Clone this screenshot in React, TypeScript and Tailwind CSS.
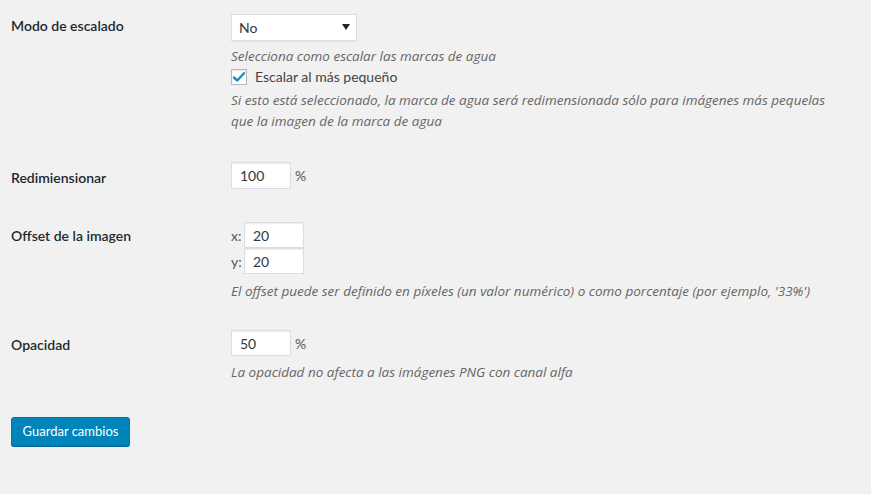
import React from "react";

const inputCls =
  "h-[27px] w-[60px] bg-white border border-[#ddd] shadow-[inset_0_1px_2px_rgba(0,0,0,0.07)] flex items-center pl-[8px] text-[14px] text-[#32373c]";
const descCls = "font-['Open_Sans',sans-serif] text-[13.5px] italic text-[#666] whitespace-nowrap";

export default function App() {
  return (
    <div className="min-h-[494px] w-full bg-[#f1f1f1] px-[11px] pt-[14px] font-['Lato',sans-serif] text-[#23282d]">
      {/* Row 1 */}
      <div className="flex">
        <div className="w-[220px] shrink-0 pt-[2px] text-[14px] font-semibold leading-[20px]">Modo de escalado</div>
        <div className="flex flex-col">
          <div className="relative h-[27px] w-[126px] bg-white border border-[#ddd] shadow-[0_1px_1px_rgba(0,0,0,0.04)] flex items-center pl-[7px] text-[14px] text-[#32373c]">
            No
            <svg className="absolute right-[6px] top-[9px]" width="8" height="6" viewBox="0 0 8 6">
              <path d="M0 0 H8 L4 6 Z" fill="#222" />
            </svg>
          </div>
          <div className={"mt-[5px] leading-[20px] " + descCls}>
            Selecciona como escalar las marcas de agua
          </div>
          <div className="mt-[1px] flex items-center leading-[20px] text-[14px] text-[#444]">
            <span className="h-[16px] w-[16px] bg-white border border-[#b4b9be] shadow-[inset_0_1px_2px_rgba(0,0,0,0.1)] flex items-center justify-center">
              <svg width="14" height="12" viewBox="0 0 14 12">
                <path d="M2 6.5 L5.3 9.5 L12 2.2" stroke="#1e8cbe" strokeWidth="2.4" fill="none" strokeLinecap="round" strokeLinejoin="round" />
              </svg>
            </span>
            <span className="ml-[8px]">Escalar al más pequeño</span>
          </div>
          <div className={"mt-[3px] leading-[21px] " + descCls}>
            Si esto está seleccionado, la marca de agua será redimensionada sólo para imágenes más pequelas
            <br />
            que la imagen de la marca de agua
          </div>
        </div>
      </div>

      {/* Row 2 */}
      <div className="mt-[30px] flex">
        <div className="w-[220px] shrink-0 pt-[6px] text-[14px] font-semibold leading-[20px]">Redimiensionar</div>
        <div className="flex items-center self-start">
          <div className={inputCls}>100</div>
          <span className="ml-[4px] text-[14px] text-[#555]">%</span>
        </div>
      </div>

      {/* Row 3 */}
      <div className="mt-[33px] flex">
        <div className="w-[220px] shrink-0 pt-[4px] text-[14px] font-semibold leading-[20px]">Offset de la imagen</div>
        <div className="flex flex-col">
          <div className="flex items-center">
            <span className="w-[13px] text-[14px] text-[#555]">x:</span>
            <div className={inputCls + " !h-[26px]"}>20</div>
          </div>
          <div className="flex items-center">
            <span className="w-[13px] text-[14px] text-[#555]">y:</span>
            <div className={inputCls + " !h-[26px]"}>20</div>
          </div>
          <div className={"mt-[7px] leading-[20px] " + descCls}>
            El offset puede ser definido en píxeles (un valor numérico) o como porcentaje (por ejemplo, '33%')
          </div>
        </div>
      </div>

      {/* Row 4 */}
      <div className="mt-[29px] flex">
        <div className="w-[220px] shrink-0 pt-[5px] text-[14px] font-semibold leading-[20px]">Opacidad</div>
        <div className="flex flex-col">
          <div className="flex items-center">
            <div className={inputCls + " !h-[26px]"}>50</div>
            <span className="ml-[4px] text-[14px] text-[#555]">%</span>
          </div>
          <div className={"mt-[6px] leading-[20px] " + descCls}>
            La opacidad no afecta a las imágenes PNG con canal alfa
          </div>
        </div>
      </div>

      <button className="mt-[35px] h-[29px] w-[119px] rounded-[3px] border border-[#0073aa] bg-[#0085ba] text-[13px] text-white shadow-[0_1px_0_#006799]">
        Guardar cambios
      </button>
    </div>
  );
}
